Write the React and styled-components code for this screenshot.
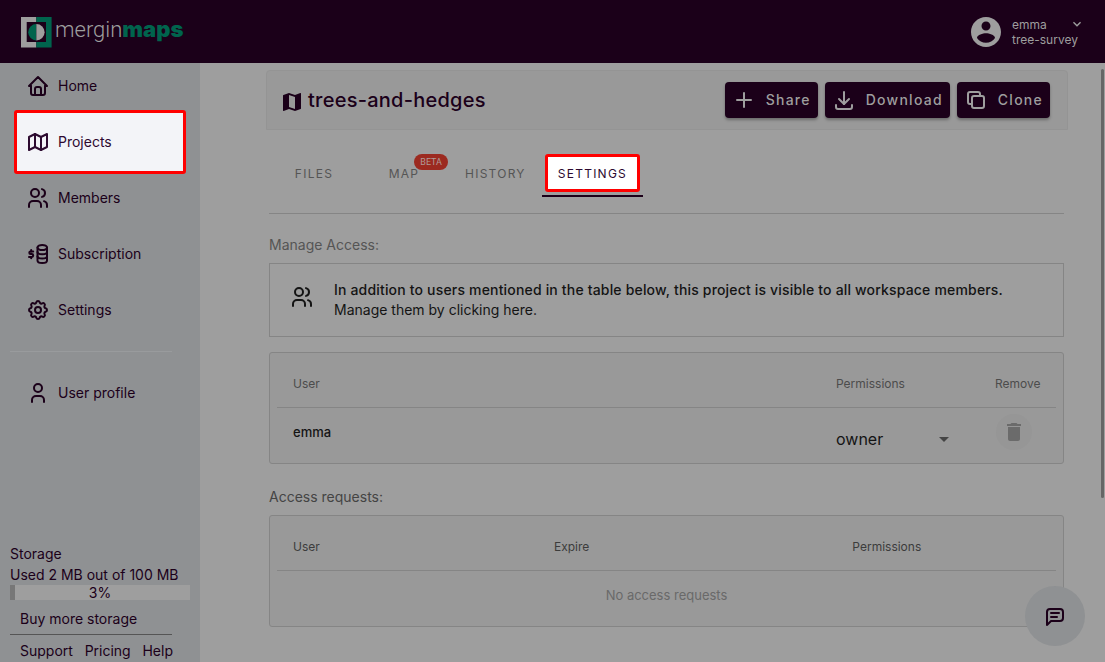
import React from "react";
import styled, { createGlobalStyle, css } from "styled-components";

const c = {
  bar: "#1b0019",
  ink: "#1b0019",
  page: "#9e9e9e",
  side: "#8f9193",
  card: "#999999",
  line: "#858585",
  green: "#00644d",
  text: "#141414",
  red: "#ff0000",
};

const GlobalStyle = createGlobalStyle`
  *, *::before, *::after { box-sizing: border-box; }
  body {
    margin: 0;
    background: ${c.page};
    color: ${c.text};
    font-family: Inter, "Liberation Sans", sans-serif;
    font-size: 14px;
    line-height: 20px;
  }
  a { color: inherit; text-decoration: none; }
  button, select { font: inherit; color: inherit; }
`;

const Shell = styled.div`
  display: flex;
  flex-direction: column;
  height: 100vh;
  overflow: hidden;
`;

const TopBar = styled.header`
  display: flex;
  align-items: center;
  justify-content: space-between;
  flex: none;
  height: 63px;
  padding: 0 20px;
  background: ${c.bar};
  color: ${c.page};
`;

const Brand = styled.a`
  display: flex;
  align-items: center;
  gap: 3px;
  font-family: Roboto, "Liberation Sans", sans-serif;
  font-size: 22px;
  line-height: 28px;
  font-weight: 300;
`;

const BrandText = styled.span`
  padding-bottom: 4px;
`;

const BrandStrong = styled.strong`
  color: ${c.green};
  font-family: Inter, "Liberation Sans", sans-serif;
  font-weight: 900;
`;

const Account = styled.button`
  display: flex;
  align-items: center;
  gap: 8px;
  padding: 0;
  border: 0;
  background: none;
  font-size: 12px;
  line-height: 15px;
  text-align: left;
`;

const AccountText = styled.span`
  display: flex;
  flex-direction: column;
  min-width: 73px;
`;

const AccountName = styled.span`
  display: flex;
  align-items: center;
  justify-content: space-between;
  height: 15px;
`;

const Body = styled.div`
  display: flex;
  flex: 1;
  min-height: 0;
`;

const Sidebar = styled.aside`
  display: flex;
  flex-direction: column;
  flex: none;
  width: 200px;
  background: ${c.side};
  color: ${c.ink};
`;

const NavList = styled.nav`
  display: flex;
  flex-direction: column;
  gap: 10px;
  padding: 0 14px;
`;

const spotlight = css`
  position: relative;
  isolation: isolate;
  &::before {
    content: "";
    position: absolute;
    z-index: -1;
    border: 3px solid ${c.red};
    border-radius: 3px;
  }
`;

const NavLink = styled.a`
  display: flex;
  align-items: center;
  gap: 8px;
  height: 46px;
  padding: 0 12px;
  ${(p) =>
    p.$marked &&
    css`
      ${spotlight}
      color: #2d0a30;
      &::before {
        inset: -9px 0;
        background: #f3f4f8;
      }
    `}
`;

const SideRule = styled.hr`
  width: 162px;
  height: 1px;
  margin: ${(p) => (p.$strong ? "5px 0" : "18px 10px")};
  border: 0;
  background: ${(p) => (p.$strong ? "#555555" : "#999b9d")};
`;

const Storage = styled.section`
  margin-top: auto;
  padding: 0 10px;
  line-height: 21px;
`;

const Meter = styled.div`
  position: relative;
  height: 15px;
  margin-bottom: 9px;
  background: ${c.page};
  line-height: 15px;
  text-align: center;
`;

const MeterFill = styled.span`
  position: absolute;
  inset: 0 auto 0 0;
  background: #777777;
`;

const MeterText = styled.span`
  position: relative;
`;

const BuyLink = styled.a`
  display: block;
  padding: 0 10px;
  line-height: 20px;
`;

const FootLinks = styled.div`
  display: flex;
  justify-content: space-between;
  width: 163px;
  padding-left: 10px;
  line-height: 22px;
`;

const Main = styled.main`
  position: relative;
  flex: 1;
  min-width: 0;
  padding: 7px 37px 0 66px;
`;

const ScrollThumb = styled.div`
  position: absolute;
  top: 6px;
  right: 1px;
  width: 3px;
  height: 429px;
  border-radius: 2px;
  background: #666666;
`;

const ProjectHead = styled.div`
  display: flex;
  align-items: center;
  justify-content: space-between;
  height: 60px;
  padding: 0 17px 0 13px;
  border: 1px solid #949494;
  border-radius: 4px 4px 0 0;
  background: ${c.card};
`;

const Title = styled.h1`
  display: flex;
  align-items: center;
  gap: 4px;
  margin: 0;
  color: ${c.ink};
  font-size: 20px;
  line-height: 28px;
  font-weight: 500;
  letter-spacing: 0.0125em;
  svg { margin-top: 4px; }
`;

const Actions = styled.div`
  display: flex;
  gap: 7px;
`;

const ActionButton = styled.button`
  display: flex;
  align-items: center;
  gap: 10px;
  height: 36px;
  padding: 0 7px;
  border: 0;
  border-radius: 4px;
  background: ${c.bar};
  box-shadow: 0 2px 3px rgba(0, 0, 0, 0.3);
  color: ${c.page};
  font-weight: 500;
  letter-spacing: 1.25px;
`;

const Content = styled.div`
  padding: 19px 4px 0 3px;
`;

const Tabs = styled.div`
  display: flex;
  padding-bottom: 16px;
  border-bottom: 1px solid ${c.line};
`;

const Tab = styled.button`
  position: relative;
  height: 48px;
  min-width: 90px;
  padding: 2px 16px 0;
  border: 0;
  background: none;
  color: #555555;
  font-size: 12px;
  letter-spacing: 1.25px;
  text-transform: uppercase;
  ${(p) =>
    p.$marked &&
    css`
      ${spotlight}
      color: #2d0a30;
      box-shadow: inset 0 -2px ${c.ink};
      &::before {
        inset: 5px 3px;
        background: #ffffff;
      }
    `}
`;

const Beta = styled.span`
  position: absolute;
  top: 5px;
  right: 1px;
  padding: 0 6px;
  border-radius: 8px;
  background: #9c2a20;
  color: #b09a98;
  font-family: Roboto, "Liberation Sans", sans-serif;
  font-size: 9px;
  line-height: 16px;
  letter-spacing: 0;
`;

const SectionTitle = styled.h2`
  margin: ${(p) => p.$top}px 0 8px;
  color: ${(p) => p.$tone};
  font-size: 14px;
  line-height: 20px;
  font-weight: 400;
`;

const Notice = styled.div`
  display: flex;
  align-items: center;
  gap: 20px;
  padding: 16px 20px;
  margin-bottom: 15px;
  border: 1px solid ${c.line};
  svg { margin-bottom: 6px; }
`;

const NoticeText = styled.p`
  margin: 0;
`;

const NoticeLead = styled.span`
  display: block;
  font-weight: 500;
  letter-spacing: 0.0125em;
`;

const Card = styled.div`
  padding: 7px;
  border: 1px solid ${c.line};
  border-radius: 3px;
  background: ${c.card};
`;

const Table = styled.table`
  width: 100%;
  table-layout: fixed;
  border-collapse: separate;
  border-spacing: 0;
`;

const Th = styled.th`
  width: ${(p) => p.$width || "auto"};
  height: 48px;
  padding: 0 16px;
  border-bottom: 1px solid ${c.line};
  color: ${(p) => p.$tone || "#4c4c4c"};
  font-size: 12px;
  font-weight: 400;
  text-align: left;
`;

const Td = styled.td`
  height: 48px;
  padding: 0 16px;
  font-size: 13px;
  font-weight: 500;
`;

const EmptyTd = styled(Td)`
  color: #696969;
  font-weight: 400;
  text-align: center;
`;

const SelectWrap = styled.span`
  display: flex;
  align-items: center;
  height: 48px;
  padding-top: 14px;
  font-size: 16px;
  font-weight: 400;
  svg { flex: none; margin-left: -24px; pointer-events: none; color: #444444; }
`;

const Select = styled.select`
  width: 120px;
  height: 32px;
  padding: 0;
  border: 0;
  background: none;
  appearance: none;
`;

const RoundButton = styled.button`
  display: flex;
  align-items: center;
  justify-content: center;
  width: 36px;
  height: 36px;
  padding: 0;
  margin-left: 1px;
  border: 0;
  border-radius: 50%;
  background: #969696;
  color: #6b6b6b;
`;

const ChatButton = styled.button`
  position: fixed;
  right: 20px;
  bottom: 16px;
  display: flex;
  align-items: center;
  justify-content: center;
  width: 60px;
  height: 60px;
  border: 0;
  border-radius: 50%;
  background: ${c.side};
  color: ${c.ink};
`;

const Svg = styled.svg`
  display: block;
  flex: none;
`;

const strokes = {
  home: ["M5 12H3l9-9 9 9h-2", "M5 12v7a2 2 0 0 0 2 2h10a2 2 0 0 0 2-2v-7", "M9 21v-6a2 2 0 0 1 2-2h2a2 2 0 0 1 2 2v6"],
  map: ["M3 7l6-3 6 3 6-3v13l-6 3-6-3-6 3V7", "M9 4v13", "M15 7v13"],
  users: [
    "M5 7a4 4 0 1 0 8 0a4 4 0 1 0-8 0",
    "M3 21v-2a4 4 0 0 1 4-4h4a4 4 0 0 1 4 4v2",
    "M16 3.13a4 4 0 0 1 0 7.75",
    "M21 21v-2a4 4 0 0 0-3-3.85",
  ],
  coins: [
    "M11.5 5.5a4.75 2.5 0 1 0 9.5 0a4.75 2.5 0 1 0-9.5 0",
    "M11.5 5.5v13c0 1.4 2.1 2.5 4.75 2.5S21 19.9 21 18.5v-13",
    "M11.5 10c0 1.4 2.1 2.3 4.75 2.3S21 11.4 21 10",
    "M11.5 14.3c0 1.4 2.1 2.3 4.75 2.3S21 15.7 21 14.3",
    "M7.2 9.5H4.6a1.3 1.3 0 0 0 0 2.6h1.2a1.4 1.4 0 0 1 0 2.8H3",
    "M5.2 8v1.5",
    "M5.2 15v1.3",
  ],
  settings: [
    "M10.325 4.317c.426-1.756 2.924-1.756 3.35 0a1.724 1.724 0 0 0 2.573 1.066c1.543-.94 3.31.826 2.37 2.37a1.724 1.724 0 0 0 1.065 2.572c1.756.426 1.756 2.924 0 3.35a1.724 1.724 0 0 0-1.066 2.573c.94 1.543-.826 3.31-2.37 2.37a1.724 1.724 0 0 0-2.572 1.065c-.426 1.756-2.924 1.756-3.35 0a1.724 1.724 0 0 0-2.573-1.066c-1.543.94-3.31-.826-2.37-2.37a1.724 1.724 0 0 0-1.065-2.572c-1.756-.426-1.756-2.924 0-3.35a1.724 1.724 0 0 0 1.066-2.573c-.94-1.543.826-3.31 2.37-2.37 1 .608 2.296.07 2.572-1.065z",
    "M9 12a3 3 0 1 0 6 0a3 3 0 1 0-6 0",
  ],
  user: ["M8 7a4 4 0 1 0 8 0a4 4 0 1 0-8 0", "M6 21v-2a4 4 0 0 1 4-4h4a4 4 0 0 1 4 4v2"],
  plus: ["M12 5v14", "M5 12h14"],
  download: ["M4 17v2a2 2 0 0 0 2 2h12a2 2 0 0 0 2-2v-2", "M7 11l5 5 5-5", "M12 4v12"],
  copy: [
    "M10 8h8a2 2 0 0 1 2 2v8a2 2 0 0 1-2 2h-8a2 2 0 0 1-2-2v-8a2 2 0 0 1 2-2z",
    "M16 8V6a2 2 0 0 0-2-2H6a2 2 0 0 0-2 2v8a2 2 0 0 0 2 2h2",
  ],
  message: ["M4 21V8a3 3 0 0 1 3-3h10a3 3 0 0 1 3 3v6a3 3 0 0 1-3 3H8l-4 4", "M8 9h8", "M8 13h6"],
};

const fills = {
  account:
    "M12 2C6.48 2 2 6.48 2 12s4.48 10 10 10 10-4.48 10-10S17.52 2 12 2zm0 3c1.66 0 3 1.34 3 3s-1.34 3-3 3-3-1.34-3-3 1.34-3 3-3zm0 14.2c-2.5 0-4.71-1.28-6-3.22.03-1.99 4-3.08 6-3.08 1.99 0 5.97 1.09 6 3.08-1.29 1.94-3.5 3.22-6 3.22z",
  mapSolid:
    "M20.5 3l-.16.03L15 5.1 9 3 3.36 4.9c-.21.07-.36.25-.36.48V20.5c0 .28.22.5.5.5l.16-.03L9 18.9l6 2.1 5.64-1.9c.21-.07.36-.25.36-.48V3.5c0-.28-.22-.5-.5-.5zM15 19l-6-2.11V5l6 2.11V19z",
  chevron: "M16.59 8.59L12 13.17 7.41 8.59 6 10l6 6 6-6z",
  caret: "M7 10l5 5 5-5z",
  trash: "M6 19c0 1.1.9 2 2 2h8c1.1 0 2-.9 2-2V7H6v12zM19 4h-3.5l-1-1h-5l-1 1H5v2h14V4z",
};

function Icon({ name, size = 24 }) {
  if (fills[name]) {
    return (
      <Svg width={size} height={size} viewBox="0 0 24 24" fill="currentColor" aria-hidden="true">
        <path d={fills[name]} />
      </Svg>
    );
  }
  return (
    <Svg
      width={size}
      height={size}
      viewBox="0 0 24 24"
      fill="none"
      stroke="currentColor"
      strokeWidth="2"
      strokeLinecap="round"
      strokeLinejoin="round"
      aria-hidden="true"
    >
      {strokes[name].map((d) => (
        <path key={d} d={d} />
      ))}
    </Svg>
  );
}

function LogoMark() {
  return (
    <Svg width="32" height="32" viewBox="0 0 32 32" aria-hidden="true">
      <path d="M1 1h15.300v5H6.700v20h9.600v5.500H1z" fill={c.page} />
      <path d="M16.300 1h15.300v30.500H16.300V26H26V6h-9.700z" fill={c.green} />
      <path d="M16.400 8a8.200 8.200 0 0 0 0 16.400z" fill={c.green} />
      <path d="M16.400 8a8.200 8.200 0 0 1 0 16.400z" fill={c.page} />
    </Svg>
  );
}

const nav = [
  ["home", "Home"],
  ["map", "Projects"],
  ["users", "Members"],
  ["coins", "Subscription"],
  ["settings", "Settings"],
];

const used = 3;

export default function App() {
  return (
    <Shell>
      <GlobalStyle />
      <TopBar>
        <Brand href="#">
          <LogoMark />
          <BrandText>
            mergin<BrandStrong>maps</BrandStrong>
          </BrandText>
        </Brand>
        <Account type="button">
          <Icon name="account" size={36} />
          <AccountText>
            <AccountName>
              emma
              <Icon name="chevron" size={16} />
            </AccountName>
            <span>tree-survey</span>
          </AccountText>
        </Account>
      </TopBar>
      <Body>
        <Sidebar>
          <NavList aria-label="Main">
            {nav.map(([icon, label]) => (
              <NavLink key={label} href="#" $marked={label === "Projects"}>
                <Icon name={icon} />
                {label}
              </NavLink>
            ))}
          </NavList>
          <SideRule />
          <NavList aria-label="Account">
            <NavLink href="#">
              <Icon name="user" />
              User profile
            </NavLink>
          </NavList>
          <Storage>
            <div>Storage</div>
            <div>Used 2 MB out of 100 MB</div>
            <Meter>
              <MeterFill style={{ width: `${used}%` }} />
              <MeterText>{used}%</MeterText>
            </Meter>
            <BuyLink href="#">Buy more storage</BuyLink>
            <SideRule $strong />
            <FootLinks>
              <a href="#">Support</a>
              <a href="#">Pricing</a>
              <a href="#">Help</a>
            </FootLinks>
          </Storage>
        </Sidebar>
        <Main>
          <ProjectHead>
            <Title>
              <Icon name="mapSolid" />
              trees-and-hedges
            </Title>
            <Actions>
              <ActionButton type="button">
                <Icon name="plus" />
                Share
              </ActionButton>
              <ActionButton type="button">
                <Icon name="download" />
                Download
              </ActionButton>
              <ActionButton type="button">
                <Icon name="copy" />
                Clone
              </ActionButton>
            </Actions>
          </ProjectHead>
          <Content>
            <Tabs role="tablist">
              <Tab type="button" role="tab">Files</Tab>
              <Tab type="button" role="tab">
                Map<Beta>Beta</Beta>
              </Tab>
              <Tab type="button" role="tab">History</Tab>
              <Tab type="button" role="tab" aria-selected="true" $marked>
                Settings
              </Tab>
            </Tabs>
            <SectionTitle $top={21} $tone="#555555">Manage Access:</SectionTitle>
            <Notice>
              <Icon name="users" />
              <NoticeText>
                <NoticeLead>
                  In addition to users mentioned in the table below, this project is visible to all workspace members.
                </NoticeLead>
                <a href="#">Manage them by clicking here.</a>
              </NoticeText>
            </Notice>
            <Card>
              <Table>
                <thead>
                  <tr>
                    <Th>User</Th>
                    <Th $width="159px">Permissions</Th>
                    <Th $width="77px">Remove</Th>
                  </tr>
                </thead>
                <tbody>
                  <tr>
                    <Td>emma</Td>
                    <Td>
                      <SelectWrap>
                        <Select aria-label="Permissions for emma" defaultValue="owner">
                          <option value="owner">owner</option>
                          <option value="writer">writer</option>
                          <option value="reader">reader</option>
                        </Select>
                        <Icon name="caret" />
                      </SelectWrap>
                    </Td>
                    <Td>
                      <RoundButton type="button" aria-label="Remove emma">
                        <Icon name="trash" />
                      </RoundButton>
                    </Td>
                  </tr>
                </tbody>
              </Table>
            </Card>
            <SectionTitle $top={23} $tone="#444444">Access requests:</SectionTitle>
            <Card>
              <Table>
                <thead>
                  <tr>
                    <Th $width="33.5%" $tone="#3c3c3c">User</Th>
                    <Th $tone="#3c3c3c">Expire</Th>
                    <Th $width="28.2%" $tone="#3c3c3c">Permissions</Th>
                  </tr>
                </thead>
                <tbody>
                  <tr>
                    <EmptyTd colSpan={3}>No access requests</EmptyTd>
                  </tr>
                </tbody>
              </Table>
            </Card>
          </Content>
          <ScrollThumb />
        </Main>
      </Body>
      <ChatButton type="button" aria-label="Open chat">
        <Icon name="message" />
      </ChatButton>
    </Shell>
  );
}
